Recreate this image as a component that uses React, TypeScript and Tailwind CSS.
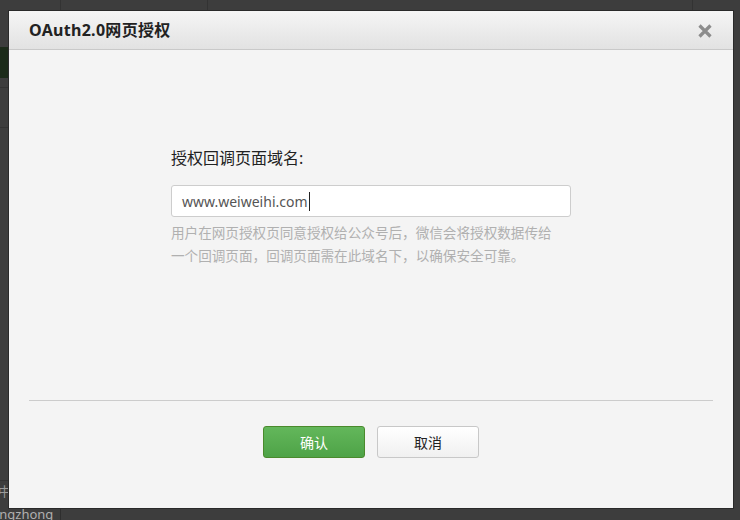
import React from "react";

export default function App() {
  const font = { fontFamily: '"Noto Sans", "Noto Sans CJK SC", sans-serif' };
  return (
    <div
      className="relative w-[740px] h-[520px] overflow-hidden bg-[#3d3d3d]"
      style={font}
    >
      {/* page behind the overlay */}
      <div className="absolute left-[60px] top-0 h-[11px] w-px bg-[#333]" />
      <div className="absolute left-[207px] top-0 h-[11px] w-px bg-[#333]" />
      <div className="absolute left-[692px] top-0 h-[11px] w-px bg-[#333]" />
      <div className="absolute left-0 top-[47px] h-[31px] w-[9px] bg-[#1c2b1a]" />
      <div className="absolute left-0 top-[87px] h-px w-[9px] bg-[#333]" />
      <div className="absolute left-0 top-[127px] h-px w-[9px] bg-[#333]" />
      <div className="absolute left-0 top-[480px] h-px w-[9px] bg-[#333]" />
      <div className="absolute left-[-2px] top-[482px] text-[13px] text-[#9a9a9a]">中</div>
      <div className="absolute left-[-8px] top-[505px] text-[13px] leading-[18px] text-[#b0b0b0]">
        angzhong
      </div>
      <div className="absolute left-[60px] top-[508px] h-[12px] w-px bg-[#2e2e2e]" />

      {/* dialog */}
      <div className="absolute left-[8px] top-[10px] w-[726px] h-[499px] border border-[#2a2a2a] bg-[#f4f4f4] flex flex-col">
        <div className="h-[39px] shrink-0 flex items-center justify-between pl-[20px] pr-[20px] border-b border-[#c9c9c9] bg-gradient-to-b from-[#f5f5f5] to-[#e2e2e2]">
          <span className="text-[16px] font-bold text-[#222] tracking-[0.3px]">
            OAuth2.0网页授权
          </span>
          <svg width="16" height="16" viewBox="0 0 16 16" className="mt-[1px]">
            <path
              d="M2.5 2.5 L13.5 13.5 M13.5 2.5 L2.5 13.5"
              stroke="#8c8c8c"
              strokeWidth="3.2"
              strokeLinecap="butt"
            />
          </svg>
        </div>

        <div className="h-[350px] shrink-0 flex justify-center pt-[97px]">
          <div className="w-[400px] flex flex-col">
            <label className="text-[16px] leading-[22px] text-[#222]">
              授权回调页面域名:
            </label>
            <div className="mt-[16px] h-[32px] w-[400px] rounded-[3px] border border-[#cdcdcd] bg-white flex items-center pl-[10px] text-[14px] text-[#555]">
              <span>www.weiweihi.com</span>
              <span className="ml-[1px] inline-block h-[19px] w-px bg-[#222]" />
            </div>
            <p className="mt-[4px] text-[13.6px] leading-[23px] text-[#b0b0b0]">
              用户在网页授权页同意授权给公众号后，微信会将授权数据传给
              <br />
              一个回调页面，回调页面需在此域名下，以确保安全可靠。
            </p>
          </div>
        </div>

        <div className="mx-[20px] h-px bg-[#cccccc]" />

        <div className="flex justify-center gap-[12px] pt-[25px]">
          <button className="w-[102px] h-[32px] rounded-[3px] border border-[#4a8a2c] bg-gradient-to-b from-[#63b75b] to-[#4ea347] text-[14px] text-white">
            确认
          </button>
          <button className="w-[102px] h-[32px] rounded-[3px] border border-[#c8c8c8] bg-gradient-to-b from-[#ffffff] to-[#f0f0f0] text-[14px] text-[#222]">
            取消
          </button>
        </div>
      </div>
    </div>
  );
}
